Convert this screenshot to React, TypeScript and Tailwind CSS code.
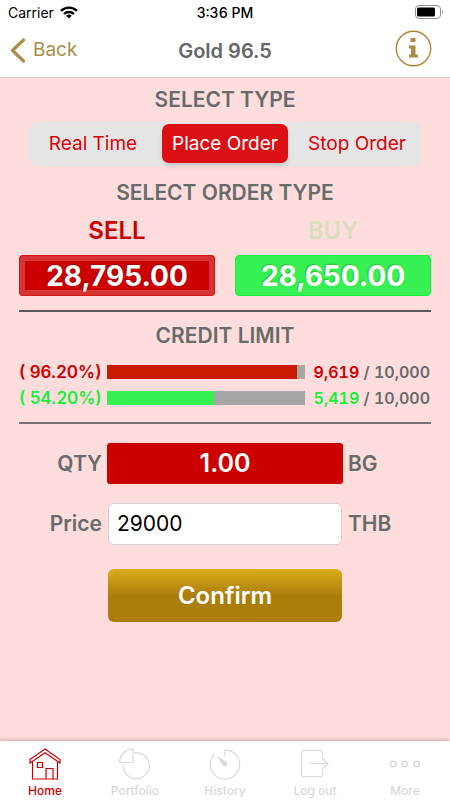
import { useState } from 'react'

const ORDER_MODES = ['Real Time', 'Place Order', 'Stop Order']

const CREDIT_ROWS = [
  { label: '( 96.20%)', value: 96.2, used: '9,619', total: '10,000', text: 'text-[#cc0000]', bar: 'bg-[#c91b00]' },
  { label: '( 54.20%)', value: 54.2, used: '5,419', total: '10,000', text: 'text-[#14f03c]', bar: 'bg-[#37f152]' },
]

function WifiIcon() {
  return (
    <svg width="18" height="13" viewBox="0 0 18 13" fill="none" stroke="black" strokeWidth={2.4} aria-hidden="true">
      <path d="M1 4.9a11.4 11.4 0 0 1 16 0" />
      <path d="M4 8a7.1 7.1 0 0 1 10 0" />
      <path d="M9 12.6L6.2 9.8a4 4 0 0 1 5.6 0z" fill="black" stroke="none" />
    </svg>
  )
}

function BatteryIcon() {
  return (
    <svg width="29" height="14" viewBox="0 0 29 14" fill="none" aria-label="Battery">
      <rect x="0.5" y="0.5" width="25" height="13" rx="3.5" stroke="#8c8c8c" />
      <rect x="2" y="2.5" width="18" height="9" rx="1.5" fill="black" />
      <path d="M27 5v4c1.4-.6 1.4-3.4 0-4z" fill="#999" />
    </svg>
  )
}

function InfoIcon() {
  return (
    <svg width="37" height="37" viewBox="0 0 37 37" aria-hidden="true">
      <circle cx="18.5" cy="18.5" r="17.2" fill="none" stroke="#ab8530" strokeWidth={1.4} />
      <path d="M15.5 8h5v4h-5zM14 15.5h6.5v9H23v3h-9v-3h2v-6h-2z" fill="#ab8d47" />
    </svg>
  )
}

const TABS = [
  {
    label: 'Home',
    icon: (
      <>
        <path d="M1 11.5L16 1l15 10.5V15L16 4.8 1 15z" />
        <path d="M3.5 13.5V31h25V13.5" />
        <path d="M8.5 14.5h5v5h-5zM17 31V20.5h7V31" />
      </>
    ),
  },
  {
    label: 'Portfolio',
    icon: (
      <>
        <path d="M14 1v13.5H.6A13.5 13.5 0 0 1 14 1z" />
        <path d="M15.8 4.8A13 13 0 1 1 4.3 17" />
      </>
    ),
  },
  {
    label: 'History',
    icon: (
      <>
        <path d="M16 7.5V1.8A14.7 14.7 0 1 1 6 5.6" />
        <path d="M9.3 9.3l5.2 7.7a1.7 1.7 0 0 0 2.5-2.5z" fill="currentColor" />
      </>
    ),
  },
  {
    label: 'Log out',
    icon: (
      <>
        <path d="M23.5 8V4A1.5 1.5 0 0 0 22 2.500H4A1.5 1.5 0 0 0 2.5 4v23A1.5 1.5 0 0 0 4 28.500h18a1.5 1.5 0 0 0 1.500-1.500v-3" />
        <path d="M11 15.7h18M22.7 9.7l6.3 6-6.3 6" />
      </>
    ),
  },
  {
    label: 'More',
    icon: (
      <g strokeWidth={1.6}>
        <circle cx="4.2" cy="16" r="2.7" />
        <circle cx="15.8" cy="16" r="2.7" />
        <circle cx="27.4" cy="16" r="2.7" />
      </g>
    ),
  },
]

export default function App() {
  const [mode, setMode] = useState('Place Order')
  const [tab, setTab] = useState('Home')
  const [price, setPrice] = useState('29000')

  return (
    <div className="flex min-h-screen flex-col bg-[#ffdddd] font-['Inter','Liberation_Sans',sans-serif] text-[#666b6b]">
      <header className="border-b border-[#dcc8c8] bg-white">
        <div className="grid h-6 grid-cols-3 items-center px-1.5 text-[14px] text-black">
          <div className="flex items-center gap-1.5 pl-0.5">
            Carrier
            <WifiIcon />
          </div>
          <time className="text-center font-medium tabular-nums">3:36 PM</time>
          <div className="flex justify-end">
            <BatteryIcon />
          </div>
        </div>
        <div className="grid h-[53px] grid-cols-[1fr_auto_1fr] items-center px-2.5">
          <button className="flex items-center gap-[7px] text-[19px] text-[#ab8d47]">
            <svg width="16" height="25" viewBox="0 0 16 25" fill="none" stroke="currentColor" strokeWidth={3.2} strokeLinecap="round" strokeLinejoin="round" aria-hidden="true">
              <path d="M13.5 2l-11 10.5 11 10.5" />
            </svg>
            Back
          </button>
          <h1 className="text-[20px] font-semibold text-[#666666]">Gold 96.5</h1>
          <button className="mr-2 mb-1 justify-self-end" aria-label="Information">
            <InfoIcon />
          </button>
        </div>
      </header>

      <main className="flex-1 px-[19px] pt-1.5">
        <h2 className="text-center text-[21px] leading-8 font-semibold">SELECT TYPE</h2>
        <div className="mx-[9px] mt-1.5 grid h-11 grid-cols-[1fr_126px_1fr] gap-1 rounded-[10px] bg-[#e5e5e5] pt-0.5 pb-[3px] text-[19px]">
          {ORDER_MODES.map((m) => (
            <button
              key={m}
              onClick={() => setMode(m)}
              aria-pressed={mode === m}
              className={
                mode === m
                  ? 'rounded-[7px] bg-[#db0f14] pt-0.5 whitespace-nowrap text-white shadow-md'
                  : 'rounded-[7px] pt-0.5 whitespace-nowrap text-[#db0008]'
              }
            >
              {m}
            </button>
          ))}
        </div>

        <h2 className="mt-[11px] text-center text-[21px] leading-8 font-semibold">SELECT ORDER TYPE</h2>
        <div className="mt-1.5 grid grid-cols-2 gap-5 text-center">
          <div>
            <div className="text-[24px] leading-8 font-semibold text-[#cc0000]">SELL</div>
            <button className="mt-2 h-[41px] w-full rounded border-6 border-[#d63333] bg-[#cc0000] text-[28px] leading-7 font-bold text-white outline -outline-offset-1 outline-[#db1414] text-shadow-[-1px_-1px_1px_rgb(0_0_0/0.2)]">
              28,795.00
            </button>
          </div>
          <div>
            <div className="text-[24px] leading-8 font-semibold text-[#d8dfc0]">BUY</div>
            <button className="mt-2 h-[41px] w-full rounded border border-[#14f03c] bg-[#37f152] text-[28px] leading-7 font-bold text-white text-shadow-[-1px_-1px_1px_rgb(0_0_0/0.2)]">
              28,650.00
            </button>
          </div>
        </div>

        <hr className="mt-3.5 border-t-2 border-[#55595d]" />

        <h2 className="mt-2 text-center text-[21px] leading-8 font-semibold">CREDIT LIMIT</h2>
        <div className="mt-[7px] leading-[26px] font-semibold">
          {CREDIT_ROWS.map((row) => (
            <div key={row.label} className="flex items-center whitespace-nowrap">
              <span className={`w-[88px] text-[17px] ${row.text}`}>{row.label}</span>
              <div className="h-3.5 flex-1 bg-[#a6a6a6]" role="progressbar" aria-valuenow={row.value} aria-label={`Credit used ${row.used}`}>
                <div className={`h-full ${row.bar}`} style={{ width: `${row.value}%` }} />
              </div>
              <span className="w-[126px] pr-px text-right text-[16px] tabular-nums">
                <span className={row.text}>{row.used}</span> / {row.total}
              </span>
            </div>
          ))}
        </div>

        <hr className="mt-[11px] border-t-2 border-[#777171]" />

        <form
          className="mt-[19px] grid grid-cols-[83px_1fr_83px] items-center gap-x-[5px] text-[21px] font-semibold"
          onSubmit={(e) => e.preventDefault()}
        >
          <span className="text-right">QTY</span>
          <button type="button" className="h-[41px] rounded-[3px] bg-[#cc0000] text-[25px] font-semibold text-white">
            1.00
          </button>
          <span>BG</span>

          <label htmlFor="price" className="mt-[19px] text-right">Price</label>
          <div className="mt-[19px] px-px">
            <input
              id="price"
              inputMode="numeric"
              value={price}
              onChange={(e) => setPrice(e.target.value)}
              className="block h-[42px] w-full min-w-0 rounded-md border border-[#d5cfcf] bg-white px-2 pb-0.5 font-normal text-black"
            />
          </div>
          <span className="mt-[19px]">THB</span>

          <button
            type="submit"
            className="col-start-2 mx-px mt-6 h-[53px] rounded-md bg-linear-to-b from-[#dbae1c] from-0% to-[#ab7d0b] to-50% text-[24px] font-semibold text-white"
          >
            Confirm
          </button>
        </form>
      </main>

      <nav className="grid h-[59px] grid-cols-5 bg-white shadow-[0_-1px_4px_rgba(120,60,60,0.35)]">
        {TABS.map((t) => (
          <button
            key={t.label}
            onClick={() => setTab(t.label)}
            className={
              tab === t.label
                ? 'flex flex-col items-center gap-1 pt-[7px] text-[#cc0000]'
                : 'flex flex-col items-center gap-1 pt-[7px] text-[#d9d9d9]'
            }
          >
            <svg width="32" height="32" viewBox="0 0 32 32" fill="none" stroke="currentColor" strokeWidth={1.2} aria-hidden="true">
              {t.icon}
            </svg>
            <span className="text-[12px] leading-[14px] font-medium">{t.label}</span>
          </button>
        ))}
      </nav>
    </div>
  )
}
